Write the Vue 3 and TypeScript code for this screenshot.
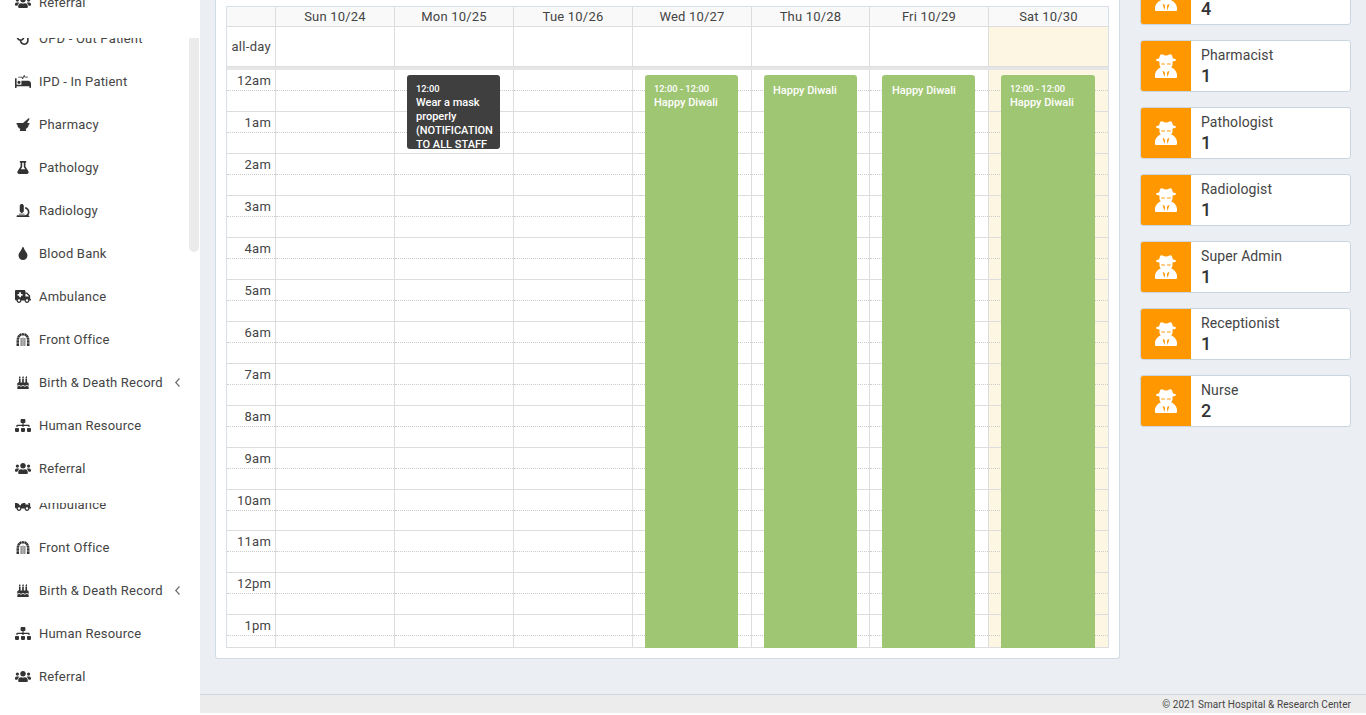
<script setup lang="ts">
interface MenuItem { label: string; icon: string; arrow?: boolean }
const icons: Record<string, { box: string; d: string }> = {
  stethoscope: { box: '0 0 512 512', d: 'M447.1 112c-34.2.5-62.3 28.4-63 62.6-.5 24.3 12.5 45.6 32 56.8V344c0 57.3-50.2 104-112 104-60 0-109.2-44.1-111.9-99.2C265 333.8 320 269.2 320 192V36.6c0-11.4-8.1-21.3-19.3-23.5L237.8.5c-13-2.6-25.6 5.8-28.2 18.8L206.4 35c-2.6 13 5.8 25.6 18.8 28.2l30.7 6.1v121.4c0 52.9-42.2 96.7-95.1 97.2-53.4.5-96.9-42.7-96.9-96V69.4l30.7-6.1c13-2.6 21.4-15.2 18.8-28.2l-3.1-15.7C107.7 6.4 95.1-2 82.1.6L19.3 13C8.1 15.3 0 25.1 0 36.6V192c0 77.3 55.1 142 128.1 156.8C130.7 439.2 208.6 512 304 512c97 0 176-75.4 176-168V231.4c19.1-11.1 32-31.7 32-55.4 0-35.7-29.2-64.5-64.9-64z' },
  procedures: { box: '0 0 640 512', d: 'M528 224H272c-8.8 0-16 7.2-16 16v144H64V144c0-8.8-7.2-16-16-16H16c-8.8 0-16 7.2-16 16v352c0 8.8 7.2 16 16 16h32c8.8 0 16-7.2 16-16v-48h512v48c0 8.8 7.2 16 16 16h32c8.8 0 16-7.2 16-16V336c0-61.9-50.1-112-112-112zM136 96h126.1l27.6 55.2c5.9 11.8 22.7 11.8 28.6 0L368 51.8 390.1 96H512c8.8 0 16-7.2 16-16s-7.2-16-16-16H409.9L382.3 8.8C376.4-3 359.6-3 353.7 8.8L304 108.2l-19.9-39.8c-1.4-2.7-4.1-4.4-7.2-4.4H136c-4.4 0-8 3.6-8 8v16c0 4.4 3.6 8 8 8zm24 256c35.3 0 64-28.7 64-64s-28.7-64-64-64-64 28.7-64 64 28.7 64 64 64z' },
  mortar: { box: '0 0 512 512', d: 'M501.5 60.9c17.2-13.3 12.9-40.5-7.6-47.6-9.6-3.3-20.3-1.4-28.2 5L256 192h160zM496 192H16c-8.8 0-16 7.2-16 16v32c0 8.8 7.2 16 16 16h16c0 81 50.2 150.1 121.1 178.3-12.8 16.9-21.5 37-24.6 59-1.3 9.5 6.2 18.7 15.9 18.7h223.2c9.7 0 17.2-9.2 15.9-18.7-3.1-22-11.8-42.1-24.6-59C429.8 406.1 480 337 480 256h16c8.8 0 16-7.2 16-16v-32c0-8.8-7.2-16-16-16z' },
  flask: { box: '0 0 448 512', d: 'M437.2 403.5L320 215V64h8c13.3 0 24-10.7 24-24V24c0-13.3-10.7-24-24-24H120c-13.3 0-24 10.7-24 24v16c0 13.3 10.7 24 24 24h8v151L10.8 403.5C-18.5 450.6 15.3 512 70.9 512h306.2c55.7 0 89.4-61.5 60.1-108.5zM137.9 320l48.2-77.6c3.7-5.2 5.8-11.6 5.8-18.4V64h64v160c0 6.9 2.2 13.2 5.8 18.4l48.2 77.6h-172z' },
  microscope: { box: '0 0 512 512', d: 'M160 320h12v16c0 8.8 7.2 16 16 16h40c8.8 0 16-7.2 16-16v-16h12c17.7 0 32-14.3 32-32V64c0-17.7-14.3-32-32-32V16c0-8.8-7.2-16-16-16h-64c-8.8 0-16 7.2-16 16v16c-17.7 0-32 14.3-32 32v224c0 17.7 14.3 32 32 32zm304 128h-1.300C493.800 412.300 512 366.300 512 316c0-100-73.500-183-170-197.800v65.500C402.500 198.200 448 252 448 316c0 70.700-57.300 128-128 128H48c-26.500 0-48 21.500-48 48 0 8.800 7.200 16 16 16h480c8.800 0 16-7.200 16-16 0-26.500-21.500-44-48-44zM104 416h208c4.400 0 8-3.600 8-8v-16c0-4.400-3.600-8-8-8H104c-4.400 0-8 3.600-8 8v16c0 4.400 3.600 8 8 8z' },
  tint: { box: '0 0 352 512', d: 'M205.220 22.090c-7.940-28.780-49.440-30.120-58.440 0C100.010 179.850 0 222.720 0 333.910 0 432.350 78.720 512 176 512s176-79.650 176-178.090c0-111.750-99.790-153.340-146.780-311.820z' },
  ambulance: { box: '0 0 640 512', d: 'M624 352h-16V243.900c0-12.700-5.100-24.900-14.100-33.900L494 110.100c-9-9-21.200-14.100-33.900-14.100H416V48c0-26.500-21.500-48-48-48H48C21.500 0 0 21.500 0 48v320c0 26.500 21.500 48 48 48h16c0 53 43 96 96 96s96-43 96-96h128c0 53 43 96 96 96s96-43 96-96h48c8.800 0 16-7.200 16-16v-32c0-8.800-7.200-16-16-16zM160 464c-26.500 0-48-21.500-48-48s21.500-48 48-48 48 21.500 48 48-21.500 48-48 48zm144-248c0 4.400-3.600 8-8 8h-56v56c0 4.400-3.600 8-8 8h-56c-4.400 0-8-3.600-8-8v-56h-56c-4.400 0-8-3.600-8-8v-56c0-4.400 3.600-8 8-8h56V96c0-4.400 3.600-8 8-8h56c4.400 0 8 3.600 8 8v56h56c4.400 0 8 3.600 8 8v56zm176 248c-26.500 0-48-21.500-48-48s21.500-48 48-48 48 21.500 48 48-21.500 48-48 48zm80-208H416V144h44.100l99.900 99.900V256z' },
  dungeon: { box: '0 0 512 512', d: 'M0 512V400h100v112zM0 380V290h100v90zM4 270l14-100 95 30-13 70zM28 150l50-80 75 60-35 55zM92 60l80-50 35 90-55 30zM190 5h132l-25 90h-82zM512 512V400H412v112zM512 380V290H412v90zM508 270l-14-100-95 30 13 70zM484 150l-50-80-75 60 35 55zM420 60l-80-50-35 90 55 30zM165 200h32v312h-32zM240 180h32v332h-32zM315 200h32v312h-32z' },
  cake: { box: '0 0 448 512', d: 'M448 384c-28 0-31.300-32-74.500-32-43.400 0-46.800 32-74.700 32-27.700 0-31.500-32-74.800-32-42.800 0-47.200 32-74.500 32-28.100 0-31.400-32-74.800-32-43.500 0-46.700 32-74.700 32v-80c0-26.500 21.500-48 48-48h16V112h64v144h64V112h64v144h64V112h64v144h16c26.500 0 48 21.500 48 48v80zm0 128H0v-96c43.400 0 46.800-32 74.700-32 27.900 0 31.300 32 74.800 32 42.800 0 47.200-32 74.500-32 28.100 0 31.400 32 74.800 32 43.500 0 46.700-32 74.700-32 27.700 0 31.500 32 74.500 32v96zM96 96c-17.800 0-32-14.200-32-32 0-31 32-23 32-64 12 0 32 29.500 32 56s-14.200 40-32 40zm128 0c-17.800 0-32-14.200-32-32 0-31 32-23 32-64 12 0 32 29.500 32 56s-14.200 40-32 40zm128 0c-17.800 0-32-14.200-32-32 0-31 32-23 32-64 12 0 32 29.500 32 56s-14.200 40-32 40z' },
  sitemap: { box: '0 0 640 512', d: 'M128 352H32c-17.670 0-32 14.330-32 32v96c0 17.670 14.330 32 32 32h96c17.670 0 32-14.330 32-32v-96c0-17.670-14.330-32-32-32zm-24-80h192v48h48v-48h192v48h48v-57.590c0-21.170-17.230-38.410-38.410-38.410H344v-64h40c17.670 0 32-14.330 32-32V32c0-17.670-14.330-32-32-32H256c-17.670 0-32 14.330-32 32v96c0 17.670 14.330 32 32 32h40v64H94.410C73.230 224 56 241.230 56 262.410V320h48v-48zm264 80h-96c-17.670 0-32 14.330-32 32v96c0 17.670 14.330 32 32 32h96c17.670 0 32-14.330 32-32v-96c0-17.670-14.330-32-32-32zm240 0h-96c-17.670 0-32 14.330-32 32v96c0 17.670 14.330 32 32 32h96c17.670 0 32-14.330 32-32v-96c0-17.670-14.330-32-32-32z' },
  users: { box: '0 0 640 512', d: 'M96 224c35.300 0 64-28.700 64-64s-28.700-64-64-64-64 28.700-64 64 28.700 64 64 64zm448 0c35.300 0 64-28.700 64-64s-28.700-64-64-64-64 28.700-64 64 28.700 64 64 64zm32 32h-64c-17.600 0-33.500 7.100-45.100 18.600 40.300 22.100 68.900 62 75.100 109.400h66c17.700 0 32-14.300 32-32v-32c0-35.300-28.700-64-64-64zm-256 0c61.900 0 112-50.100 112-112S381.900 32 320 32 208 82.100 208 144s50.100 112 112 112zm76.800 32h-8.300c-20.800 10-43.900 16-68.500 16s-47.600-6-68.500-16h-8.300C179.600 288 128 339.600 128 403.200V432c0 26.500 21.500 48 48 48h288c26.500 0 48-21.500 48-48v-28.800c0-63.600-51.600-115.200-115.200-115.200zm-223.700-13.400C161.500 263.100 145.600 256 128 256H64c-35.300 0-64 28.700-64 64v32c0 17.700 14.300 32 32 32h65.900c6.300-47.400 34.900-87.300 75.200-109.400z' },
}
const spy = 'M5 1.500C5.500 .3 6.500 0 7.500 .5L9.500 1.300Q11 1.800 12.500 1.300L14.500 .5C15.500 0 16.500 .3 17 1.500L18 4.600C20 5 21 5.400 21 5.900C21 6.500 20 7 18 7.300L17.500 8.100V10C17.500 11.500 17 12.700 16.200 13.600C19.800 15 22 18 22 21.500V23a1 1 0 0 1-1 1H1a1 1 0 0 1-1-1V21.500C0 18 2.200 15 5.800 13.600C5 12.700 4.500 11.500 4.500 10V8.100L4 7.300C2 7 1 6.500 1 5.900C1 5.400 2 5 4 4.600ZM6.300 9.400h3.600v1.200h-3.600zM12.100 9.400h3.600v1.200h-3.600zM7.600 17L9.400 23L10.100 19.200L9.200 17.500ZM14.400 17L12.600 23L11.900 19.200L12.800 17.500Z'

const all: MenuItem[] = [
  { label: 'OPD - Out Patient', icon: 'stethoscope' },
  { label: 'IPD - In Patient', icon: 'procedures' },
  { label: 'Pharmacy', icon: 'mortar' },
  { label: 'Pathology', icon: 'flask' },
  { label: 'Radiology', icon: 'microscope' },
  { label: 'Blood Bank', icon: 'tint' },
  { label: 'Ambulance', icon: 'ambulance' },
  { label: 'Front Office', icon: 'dungeon' },
  { label: 'Birth & Death Record', icon: 'cake', arrow: true },
  { label: 'Human Resource', icon: 'sitemap' },
  { label: 'Referral', icon: 'users' },
]
const sliceA = all.slice(-1)
const sliceB = all
const sliceC = all.slice(6)

const days = ['Sun 10/24', 'Mon 10/25', 'Tue 10/26', 'Wed 10/27', 'Thu 10/28', 'Fri 10/29', 'Sat 10/30']
const hours = ['12am', '1am', '2am', '3am', '4am', '5am', '6am', '7am', '8am', '9am', '10am', '11am', '12pm', '1pm']

interface CalEvent { time?: string; title: string; cls: string }
const events: Record<number, CalEvent> = {
  1: { time: '12:00', title: 'Wear a mask properly (NOTIFICATION TO ALL STAFF', cls: 'dark' },
  3: { time: '12:00 - 12:00', title: 'Happy Diwali', cls: 'green' },
  4: { title: 'Happy Diwali', cls: 'green notime' },
  5: { title: 'Happy Diwali', cls: 'green notime fri' },
  6: { time: '12:00 - 12:00', title: 'Happy Diwali', cls: 'green wide' },
}

const staff = [
  { role: '', count: 4 },
  { role: 'Pharmacist', count: 1 },
  { role: 'Pathologist', count: 1 },
  { role: 'Radiologist', count: 1 },
  { role: 'Super Admin', count: 1 },
  { role: 'Receptionist', count: 1 },
  { role: 'Nurse', count: 2 },
]
</script>

<template>
  <div class="page">
    <aside class="sidebar">
      <div class="slice slice-a">
        <div v-for="m in sliceA" :key="m.label" class="item">
          <svg class="mi" :viewBox="icons[m.icon].box"><path :d="icons[m.icon].d" /></svg>
          <span>{{ m.label }}</span>
        </div>
      </div>
      <div class="slice slice-b">
        <div v-for="m in sliceB" :key="m.label" class="item">
          <svg class="mi" :viewBox="icons[m.icon].box"><path :d="icons[m.icon].d" /></svg>
          <span>{{ m.label }}</span>
          <svg v-if="m.arrow" class="chev" viewBox="0 0 5 9"><path d="M4.500 .5 .7 4.500l3.800 4" /></svg>
        </div>
      </div>
      <div class="slice slice-c">
        <div v-for="m in sliceC" :key="m.label" class="item">
          <svg class="mi" :viewBox="icons[m.icon].box"><path :d="icons[m.icon].d" /></svg>
          <span>{{ m.label }}</span>
          <svg v-if="m.arrow" class="chev" viewBox="0 0 5 9"><path d="M4.500 .5 .7 4.500l3.800 4" /></svg>
        </div>
      </div>
      <div class="thumb"></div>
    </aside>

    <div class="main">
      <div class="content">
        <section class="card">
          <div class="cal">
            <div class="row head">
              <div class="axis"></div>
              <div v-for="d in days" :key="d" class="cell">{{ d }}</div>
            </div>
            <div class="row allday">
              <div class="axis">all-day</div>
              <div v-for="(d, i) in days" :key="d" class="cell" :class="{ today: i === 6 }"></div>
            </div>
            <div class="divider"></div>
            <div class="row grid">
              <div class="axis times">
                <div v-for="h in hours" :key="h" class="hour">
                  <div class="slot major">{{ h }}</div>
                  <div class="slot"></div>
                </div>
              </div>
              <div v-for="(d, i) in days" :key="d" class="cell daycol" :class="{ today: i === 6 }">
                <div v-for="h in hours" :key="h" class="hour">
                  <div class="slot major"></div>
                  <div class="slot"></div>
                </div>
                <div v-if="events[i]" class="event" :class="events[i].cls">
                  <div v-if="events[i].time" class="ev-time">{{ events[i].time }}</div>
                  <div class="ev-title">{{ events[i].title }}</div>
                </div>
              </div>
            </div>
          </div>
        </section>

        <div class="staff">
          <div v-for="(s, i) in staff" :key="i" class="box" :class="{ first: i === 0 }">
            <div class="box-icon">
              <svg class="spy" viewBox="0 0 22 24"><path fill-rule="evenodd" :d="spy" /></svg>
            </div>
            <div class="box-body">
              <div class="role">{{ s.role }}</div>
              <div class="count">{{ s.count }}</div>
            </div>
          </div>
        </div>
      </div>
      <footer class="foot">© 2021 Smart Hospital &amp; Research Center</footer>
    </div>
  </div>
</template>

<style>
html, body { margin: 0; padding: 0; background: #fff; overflow: hidden; }
</style>

<style scoped>
.page {
  display: flex;
  height: 715px;
  overflow: hidden;
  font-family: Roboto, "Liberation Sans", sans-serif;
  color: #444;
}
.sidebar {
  position: relative;
  width: 200px;
  flex: none;
  height: 715px;
  background: #fff;
  overflow: hidden;
}
.slice { overflow: hidden; }
.slice-a { height: 10px; margin-bottom: 28px; }
.slice-a .item { margin-top: -19px; }
.slice-b { height: 452px; margin-bottom: 13px; }
.slice-b .item:first-child { margin-top: -21px; }
.slice-c { height: 212px; }
.slice-c .item:first-child { margin-top: -20px; }
.item {
  display: flex;
  align-items: center;
  height: 43px;
  padding-left: 15px;
  font-size: 13px;
  letter-spacing: 0.2px;
  color: #444;
  white-space: nowrap;
  box-sizing: border-box;
}
.mi { width: 16px; height: 13px; margin-right: 8px; flex: none; fill: #333; }
.chev { width: 5px; height: 9px; margin-left: 12.500px; flex: none; fill: none; stroke: #666; stroke-width: 1.100; }
.thumb {
  position: absolute;
  left: 189px;
  top: 38px;
  width: 10px;
  height: 214px;
  background: #ebebeb;
  border-radius: 0 0 5px 5px;
}
.main {
  flex: 1;
  min-width: 0;
  height: 713px;
  background: #ebeef2;
  display: flex;
  flex-direction: column;
}
.content {
  flex: 1;
  min-height: 0;
  display: flex;
  align-items: flex-start;
  padding-left: 15px;
  overflow: hidden;
}
.card {
  width: 905px;
  height: 659px;
  box-sizing: border-box;
  background: #fff;
  border: 1px solid #d2dce4;
  border-top: none;
  border-radius: 0 0 3px 3px;
  padding: 6px 10px 10px;
  flex: none;
  overflow: hidden;
}
.cal {
  width: 881px;
  border: 1px solid #d8deea;
  border-bottom: none;
  height: 641px;
  overflow: hidden;
  font-size: 13px;
  color: #444;
}
.row {
  display: grid;
  grid-template-columns: 49px 119px 119px 119px 119px 118px 119px 119px;
}
.axis { box-sizing: border-box; border-right: 1px solid #ddd; }
.cell { box-sizing: border-box; border-right: 1px solid #ddd; }
.cell:last-child { border-right: none; }
.head { height: 20px; background: #f9f9f9; border-bottom: 1px solid #ddd; box-sizing: border-box; }
.head .cell { text-align: center; line-height: 19px; letter-spacing: 0.2px; }
.allday { height: 40px; box-sizing: border-box; border-bottom: 1px solid #ddd; }
.allday .axis { line-height: 39px; padding-right: 4px; text-align: right; letter-spacing: 0.3px; }
.today { background: #fcf6e2; }
.divider { height: 3px; background: #e6e6e6; }
.grid { align-items: start; }
.hour { height: 42px; }
.hour:nth-child(11) { height: 41px; }
.slot { height: 21px; box-sizing: border-box; border-bottom: 1px solid #ddd; }
.slot.major { border-bottom: 1px dotted #ccc; }
.hour:nth-child(11) .slot:last-child { height: 20px; }
.times .slot.major { text-align: right; padding-right: 4px; line-height: 22px; letter-spacing: 0.2px; }
.daycol, .times { position: relative; height: 578px; border-bottom: 1px solid #ddd; }
.event {
  position: absolute;
  top: 5px;
  left: 12px;
  box-sizing: border-box;
  width: 93px;
  border-radius: 3px;
  color: #fff;
  padding: 7px 9px 0;
  overflow: hidden;
}
.wide { width: 94px; }
.fri { padding-left: 10px; }
.dark { height: 74px; background: #3f3f3f; }
.green { height: 600px; background: #9fc673; }
.ev-time { font-size: 9.300px; line-height: 14px; font-weight: 500; }
.ev-title { font-size: 11px; line-height: 14px; font-weight: 500; }
.notime .ev-title { padding-top: 1px; line-height: 15px; }
.staff {
  width: 211px;
  margin-left: 20px;
  flex: none;
  display: flex;
  flex-direction: column;
  gap: 15px;
}
.box {
  display: flex;
  height: 52px;
  box-sizing: border-box;
  background: #fff;
  border: 1px solid #c9d6e0;
  border-radius: 3px;
  overflow: hidden;
}
.box.first { margin-top: -27px; }
.box-icon {
  width: 50px;
  flex: none;
  background: #ff9800;
  display: flex;
  align-items: center;
  justify-content: center;
}
.spy { width: 22px; height: 24px; fill: #fff; }
.box-body { padding: 5px 10px 0; }
.role { font-size: 14px; line-height: 18px; min-height: 18px; color: #444; letter-spacing: 0.1px; }
.count { font-size: 18px; line-height: 24px; font-weight: 500; color: #333; }
.foot {
  height: 19px;
  flex: none;
  box-sizing: border-box;
  background: #ececec;
  border-top: 1px solid #d2d6de;
  text-align: right;
  padding-right: 15px;
  font-size: 10px;
  letter-spacing: 0.06px;
  line-height: 19px;
  color: #444;
}
</style>
